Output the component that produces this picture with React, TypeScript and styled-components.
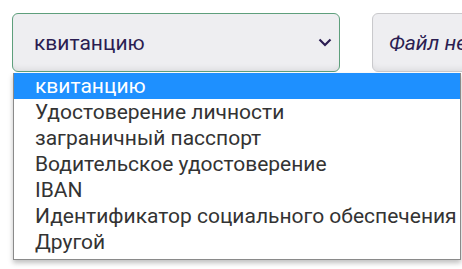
import React from 'react';
import styled, { createGlobalStyle } from 'styled-components';

const GlobalStyle = createGlobalStyle`
    html, body {
        margin: 0;
        background: #ffffff;
        overflow: hidden;
    }

    body {
        font-family: Roboto, "Noto Sans", sans-serif;
    }
`

const options = [
    'квитанцию',
    'Удостоверение личности',
    'заграничный пасспорт',
    'Водительское удостоверение',
    'IBAN',
    'Идентификатор социального обеспечения',
    'Другой',
];

export default function App() {
    return (
        <>
            <GlobalStyle/>
            <Page>
                <Row>
                    <SelectBox>
                        <span>{options[0]}</span>
                        <svg width="14" height="9" viewBox="0 0 14 9" fill="none">
                            <path d="M1.5 1.5L7 7L12.5 1.5" stroke="#2b1d52" strokeWidth="2.2"/>
                        </svg>
                        <Dropdown>
                            {options.map((o, i) => (
                                <Option key={o} $active={i === 0}>{o}</Option>
                            ))}
                        </Dropdown>
                    </SelectBox>
                    <FileBox>Файл не выбран</FileBox>
                </Row>
            </Page>
        </>
    );
}

const Page = styled.div`
    padding: 13px 0 0 12px;
    width: 462px;
    height: 269px;
    box-sizing: border-box;
    overflow: hidden;
`

const Row = styled.div`
    display: flex;
    gap: 32px;
`

const SelectBox = styled.div`
    position: relative;
    flex-shrink: 0;
    box-sizing: border-box;
    width: 328px;
    height: 59px;
    padding: 0 7px 0 21px;
    display: flex;
    align-items: center;
    justify-content: space-between;
    border: 1px solid #5e9f7c;
    border-radius: 6px;
    background: #eeeef1;
    box-shadow: inset 0 -6px 6px -4px rgba(0, 0, 0, 0.08);
    color: #2b1d52;
    font-size: 21px;
`

const FileBox = styled.div`
    box-sizing: border-box;
    width: 200px;
    height: 59px;
    flex-shrink: 0;
    padding-left: 16px;
    display: flex;
    align-items: center;
    border: 1px solid #c9c9cc;
    border-radius: 6px;
    background: #eeeef1;
    box-shadow: inset 0 -6px 6px -4px rgba(0, 0, 0, 0.08);
    color: #2b1d52;
    font-size: 21px;
    font-style: italic;
    white-space: nowrap;
    overflow: hidden;
`

const Dropdown = styled.ul`
    position: absolute;
    top: 59px;
    left: 0;
    width: 448px;
    margin: 0;
    padding: 0 0 4px;
    list-style: none;
    box-sizing: border-box;
    background: #ffffff;
    border: 1px solid #8a8a8a;
    border-top: none;
    box-shadow: 0 3px 5px rgba(0, 0, 0, 0.25);
    z-index: 2;
`

const Option = styled.li<{ $active?: boolean }>`
    height: 26px;
    line-height: 26px;
    padding-left: 21px;
    font-size: 21px;
    white-space: nowrap;
    color: ${p => p.$active ? '#ffffff' : '#333333'};
    background: ${p => p.$active ? '#1e90ff' : 'transparent'};
`
